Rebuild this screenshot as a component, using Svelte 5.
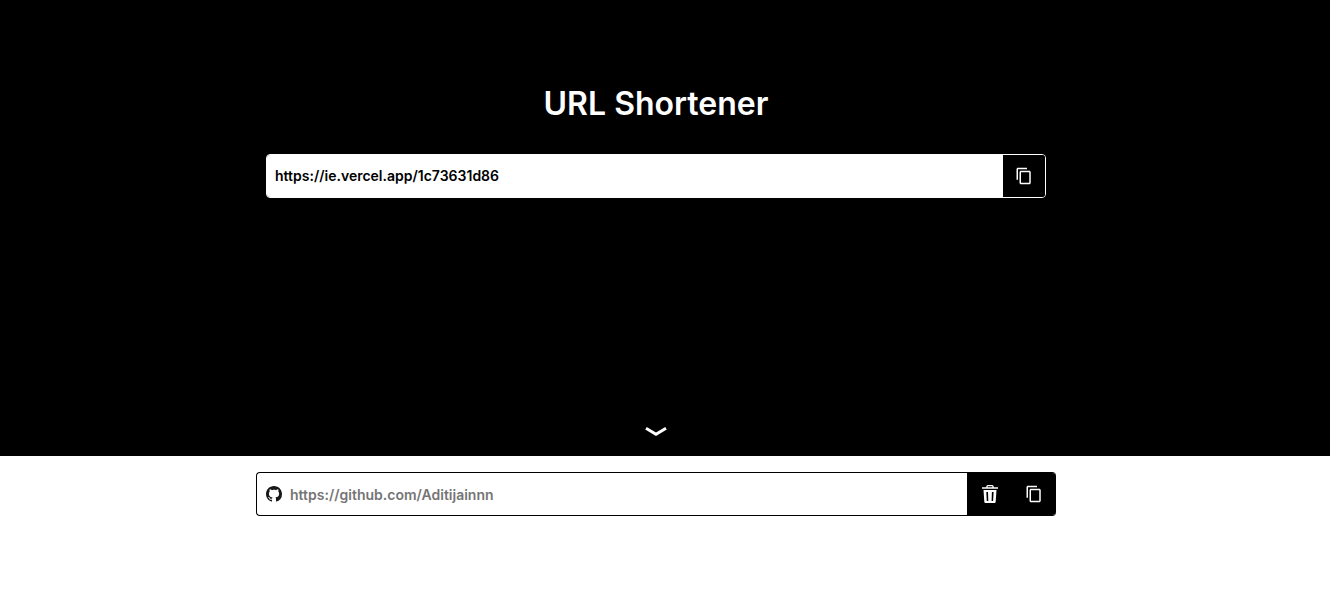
<script lang="ts">
  let shortUrl = $state('https://ie.vercel.app/1c73631d86');
  let links = $state([{ id: '1c73631d86', url: 'https://github.com/Aditijainnn' }]);

  function copy(text: string) {
    navigator.clipboard?.writeText(text);
  }

  function remove(id: string) {
    links = links.filter((link) => link.id !== id);
  }
</script>

{#snippet copyIcon()}
  <svg width="18" height="18" viewBox="0 0 24 24" fill="currentColor" aria-hidden="true">
    <path d="M16 1H4c-1.1 0-2 .9-2 2v14h2V3h12V1zm3 4H8c-1.1 0-2 .9-2 2v14c0 1.1.9 2 2 2h11c1.1 0 2-.9 2-2V7c0-1.1-.9-2-2-2zm0 16H8V7h11v14z" />
  </svg>
{/snippet}

<main>
  <section class="hero">
    <h1>URL Shortener</h1>
    <form class="shorten" onsubmit={(e) => e.preventDefault()}>
      <input type="text" aria-label="Short URL" bind:value={shortUrl} />
      <button type="button" aria-label="Copy" onclick={() => copy(shortUrl)}>
        {@render copyIcon()}
      </button>
    </form>
    <a class="down" href="#links" aria-label="Show links">
      <svg width="24" height="12" viewBox="0 0 24 12" fill="none" stroke="currentColor" stroke-width="3" aria-hidden="true">
        <path d="M2 2.200L12 8.200L22 2.200" />
      </svg>
    </a>
  </section>

  <section class="history" id="links">
    {#each links as link (link.id)}
      <div class="row">
        <a class="link" href={link.url}>
          <svg width="16" height="16" viewBox="0 0 16 16" fill="#191717" aria-hidden="true">
            <path d="M8 0C3.58 0 0 3.58 0 8c0 3.54 2.29 6.53 5.47 7.59.4.07.55-.17.55-.38 0-.19-.01-.82-.01-1.49-2.01.37-2.53-.49-2.69-.94-.09-.23-.48-.94-.82-1.13-.28-.15-.68-.52-.01-.53.63-.01 1.08.58 1.23.82.72 1.21 1.87.87 2.33.66.07-.52.28-.87.51-1.07-1.78-.2-3.64-.89-3.64-3.95 0-.87.31-1.59.82-2.15-.08-.2-.36-1.02.08-2.12 0 0 .67-.21 2.2.82.64-.18 1.32-.27 2-.27s1.36.09 2 .27c1.53-1.04 2.2-.82 2.2-.82.44 1.1.16 1.92.08 2.12.51.56.82 1.27.82 2.15 0 3.07-1.87 3.75-3.65 3.95.29.25.54.73.54 1.48 0 1.07-.01 1.93-.01 2.2 0 .21.15.46.55.38A8.01 8.01 0 0 0 16 8c0-4.42-3.58-8-8-8z" />
          </svg>
          <span>{link.url}</span>
        </a>
        <button type="button" aria-label="Delete" onclick={() => remove(link.id)}>
          <svg width="18" height="20" viewBox="0 0 18 20" fill="currentColor" aria-hidden="true">
            <path fill-rule="evenodd" d="M1 4.800V3.300h4.300V2.500Q5.300 1 6.800 1h4.400q1.500 0 1.500 1.500v.8H17v1.500zM6.700 3.300h4.600V2.200H6.700zM2.500 6h13l-.8 11.800Q14.600 19 13.500 19h-9q-1.100 0-1.200-1.200zM5.300 8l.5 9h1.500l-.3-9zM10.900 8l-.3 9h1.500l.5-9z" />
          </svg>
        </button>
        <button type="button" aria-label="Copy" onclick={() => copy(link.url)}>
          {@render copyIcon()}
        </button>
      </div>
    {/each}
  </section>
</main>

<style>
  :global(body) {
    margin: 0;
    background: #fff;
  }

  main {
    font-family: Inter, "Liberation Sans", sans-serif;
    color: #000;
  }

  .hero,
  .history {
    box-sizing: border-box;
    display: flex;
    flex-direction: column;
    align-items: center;
    padding-right: 18px;
  }

  .hero {
    min-height: 456px;
    padding-top: 80px;
    padding-bottom: 18px;
    background: #000;
    color: #fff;
  }

  h1 {
    margin: 0 0 26px;
    font-size: 32px;
    font-weight: 600;
    line-height: 48px;
  }

  .shorten,
  .row {
    box-sizing: border-box;
    display: flex;
    width: 100%;
    height: 44px;
    border-radius: 4px;
    overflow: hidden;
  }

  .shorten {
    max-width: 780px;
    border: 1px solid #fff;
  }

  input {
    flex: 1;
    min-width: 0;
    padding: 0 8px 2px;
    border: 0;
    outline: 0;
    background: #fff;
    color: #000;
    font: 600 14px Inter, "Liberation Sans", sans-serif;
  }

  button {
    display: flex;
    align-items: center;
    justify-content: center;
    width: 42px;
    padding: 0;
    border: 0;
    background: #000;
    color: #fff;
    cursor: pointer;
  }

  .down {
    display: flex;
    margin-top: auto;
    color: #fff;
  }

  .history {
    gap: 12px;
    padding-top: 16px;
  }

  .row {
    max-width: 800px;
    border: 1px solid #000;
    border-right: 0;
  }

  .row button {
    width: 44px;
  }

  .link {
    display: flex;
    flex: 1;
    align-items: center;
    gap: 8px;
    min-width: 0;
    padding: 0 9px;
    border-right: 1px solid #000;
    color: #757575;
    font-size: 14px;
    font-weight: 600;
    text-decoration: none;
  }
</style>
